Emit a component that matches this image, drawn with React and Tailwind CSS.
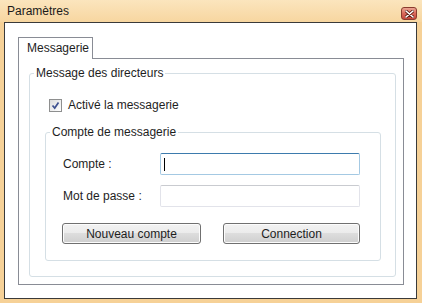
import React from 'react'

const font = "font-['Liberation_Sans',Arial,sans-serif]"

const CloseButton = () => (
  <div className="mt-[7px] mr-[5px] w-[16px] h-[13px] rounded-[3px] border border-[#8a3b2e] bg-gradient-to-b from-[#eba592] via-[#d9685a] to-[#c4473a] flex items-center justify-center">
    <svg width="9" height="8" viewBox="0 0 9 8">
      <path d="M1 1 L8 7 M8 1 L1 7" stroke="#5a1a12" strokeWidth="3" strokeLinecap="round" />
      <path d="M1 1 L8 7 M8 1 L1 7" stroke="#ffffff" strokeWidth="1.6" strokeLinecap="round" />
    </svg>
  </div>
)

const Checkbox = () => (
  <div className="w-[13px] h-[13px] border border-[#8e8f8f] bg-gradient-to-br from-[#dcdcdc] to-[#ffffff] flex items-center justify-center">
    <svg width="9" height="9" viewBox="0 0 9 9">
      <path d="M1.5 4.5 L3.7 7 L7.5 1.5" stroke="#3e5190" strokeWidth="1.7" fill="none" />
    </svg>
  </div>
)

const Button = ({ label, w }) => (
  <div
    className={`${w} h-[21px] rounded-[3px] border border-[#707070] bg-[linear-gradient(#f2f2f2_0%,#ebebeb_50%,#dddddd_50%,#cfcfcf_100%)] flex items-center justify-center text-[#1e1e1e] shadow-[inset_0_0_0_1px_#fcfcfc]`}
  >
    {label}
  </div>
)

export default function App() {
  return (
    <div className={`${font} text-[12px] w-[422px] h-[303px] bg-[#f6d197] flex flex-col`}>
      <div className="h-[23px] flex items-start justify-between bg-gradient-to-b from-[#fbe5bd] to-[#f7d6a0]">
        <span className="ml-[7px] mt-[4px] leading-[15px] text-[#1a1a1a]">Paramètres</span>
        <CloseButton />
      </div>
      <div className="ml-[4px] mr-[5px] mb-[4px] flex-1 border border-[#3a3a3a] bg-white pl-[13px] pr-[12px] pt-[14px] pb-[13px] flex flex-col">
        <div className="flex">
          <div className="relative z-10 -mb-px w-[75px] h-[22px] border border-b-0 border-[#898c95] bg-white pl-[8px] pt-[3px] leading-[15px] text-[#1e1e1e]">
            Messagerie
          </div>
        </div>
        <div className="flex-1 border border-[#898c95] pl-[10px] pr-[7px] pt-[6px] pb-[7px] flex">
          <fieldset className="flex-1 border border-[#d5dfe5] rounded-[3px] p-0">
            <legend className="ml-[4px] px-[2px] leading-[16px] text-[#1e1e1e]">Message des directeurs</legend>
            <div className="pl-[15px] pr-[14px] pb-[15px]">
              <div className="mt-[17px] ml-[4px] flex items-center gap-[6px] text-[#1e1e1e] leading-[14px]">
                <Checkbox />
                <span>Activé la messagerie</span>
              </div>
              <fieldset className="mt-[12px] border border-[#d5dfe5] rounded-[3px] p-0">
                <legend className="ml-[4px] px-[2px] leading-[16px] text-[#1e1e1e]">Compte de messagerie</legend>
                <div className="pl-[16px] pr-[19px] pb-[16px]">
                  <div className="mt-[13px] flex flex-col gap-[10px]">
                    <div className="flex items-center">
                      <span className="w-[98px] pl-[1px] text-[#1e1e1e]">Compte :</span>
                      <div className="w-[200px] h-[22px] rounded-[2px] border border-[#a4c9e3] border-t-[#3d7bad] flex items-center pl-[3px]">
                        <div className="w-px h-[13px] bg-black" />
                      </div>
                    </div>
                    <div className="flex items-center">
                      <span className="w-[98px] pl-[1px] text-[#1e1e1e]">Mot de passe :</span>
                      <div className="w-[200px] h-[22px] rounded-[2px] border border-[#e2e3ea] border-t-[#c9cbd0]" />
                    </div>
                  </div>
                  <div className="mt-[16px] flex gap-[22px]">
                    <Button label="Nouveau compte" w="w-[139px]" />
                    <Button label="Connection" w="w-[137px]" />
                  </div>
                </div>
              </fieldset>
            </div>
          </fieldset>
        </div>
      </div>
    </div>
  )
}
